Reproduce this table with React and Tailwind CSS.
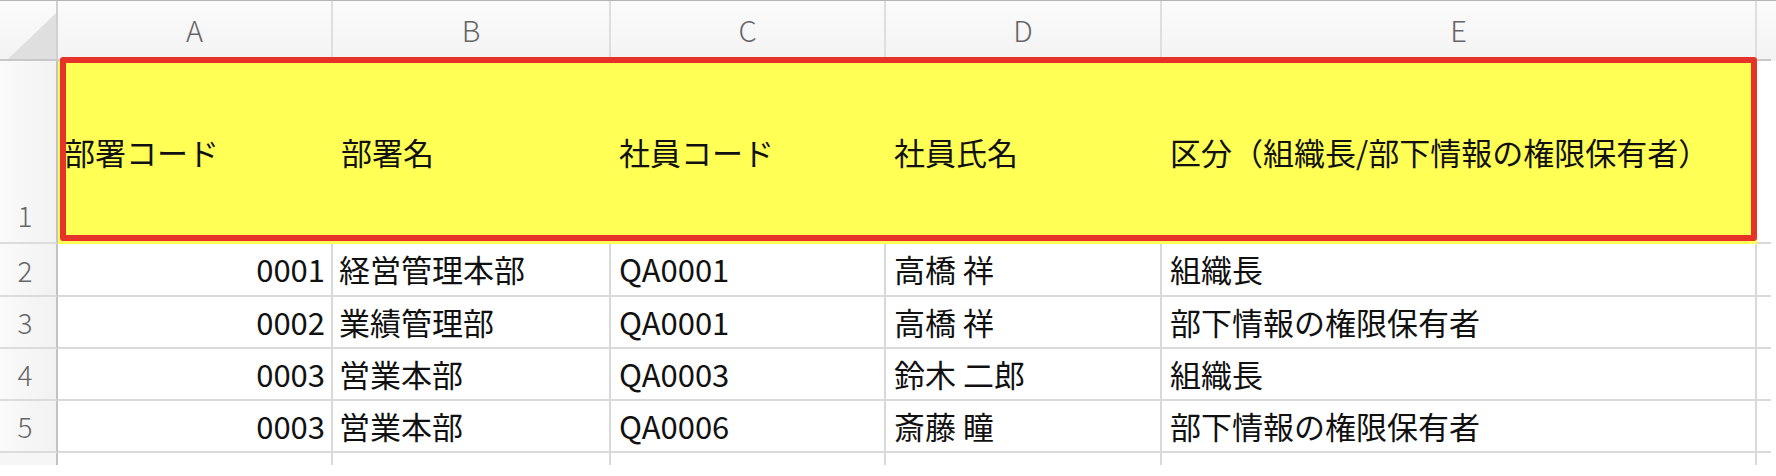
import React from "react";

const cols = [
  { key: "A", w: "w-[275px]" },
  { key: "B", w: "w-[278px]" },
  { key: "C", w: "w-[275px]" },
  { key: "D", w: "w-[276px]" },
  { key: "E", w: "w-[595px]" },
];

const headers = ["部署コード", "部署名", "社員コード", "社員氏名", "区分（組織長/部下情報の権限保有者）"];

const rows = [
  { n: 2, h: "h-[53px]", cells: ["0001", "経営管理本部", "QA0001", "高橋 祥", "組織長"] },
  { n: 3, h: "h-[52px]", cells: ["0002", "業績管理部", "QA0001", "高橋 祥", "部下情報の権限保有者"] },
  { n: 4, h: "h-[52px]", cells: ["0003", "営業本部", "QA0003", "鈴木 二郎", "組織長"] },
  { n: 5, h: "h-[52px]", cells: ["0003", "営業本部", "QA0006", "斎藤 瞳", "部下情報の権限保有者"] },
];

const RowHead = ({ children, className = "" }) => (
  <div
    className={`w-[58px] shrink-0 border-r-2 border-b-2 border-r-[#c2c2c2] border-b-[#dcdcdc] bg-gradient-to-r from-[#fafafa] to-[#f2f2f2] text-[28px] font-light text-[#666] flex justify-center pr-[6px] ${className}`}
  >
    {children}
  </div>
);

const App = () => {
  return (
    <div
      className="relative w-[1776px] h-[476px] bg-white overflow-hidden text-[#111]"
      style={{ fontFamily: '"Noto Sans CJK JP", "Noto Sans", sans-serif' }}
    >
      {/* column letters */}
      <div className="flex h-[61px] border-t border-[#b4b4b4] bg-gradient-to-b from-[#fbfbfb] to-[#f3f3f3]">
        <div className="w-[58px] shrink-0 border-r-2 border-b-2 border-r-[#d0d0d0] border-b-[#c8c8c8]">
          <svg width="56" height="58" className="block">
            <polygon points="8,58 56,12 56,58" fill="#dfdfdf" />
          </svg>
        </div>
        {cols.map((c) => (
          <div
            key={c.key}
            className={`${c.w} shrink-0 border-r-2 border-b-2 border-r-[#dedede] border-b-[#c8c8c8] flex items-center justify-center text-[29px] font-light text-[#666]`}
          >
            {c.key}
          </div>
        ))}
        <div className="w-[14px] shrink-0 border-b-2 border-b-[#c8c8c8]" />
      </div>

      {/* row 1 */}
      <div className="flex h-[183px]">
        <RowHead className="items-end pb-[6px]">1</RowHead>
        {cols.map((c, i) => (
          <div
            key={c.key}
            className={`${c.w} shrink-0 bg-[#ffff55] flex items-center text-[31px] ${i === 0 ? "pl-[6px]" : "pl-[8px]"}`}
          >
            <span className="whitespace-nowrap">{headers[i]}</span>
          </div>
        ))}
        <div className="w-[14px] shrink-0 border-b-2 border-[#d9d9d9]" />
      </div>

      {/* data rows */}
      {rows.map((r) => (
        <div key={r.n} className={`flex ${r.h}`}>
          <RowHead className="items-center">{r.n}</RowHead>
          {cols.map((c, i) => (
            <div
              key={c.key}
              className={`${c.w} shrink-0 border-r-2 border-b-2 border-[#d9d9d9] flex items-center text-[31px] ${
                i === 0 ? "justify-end pr-[6px]" : i === 1 ? "pl-[6px]" : "pl-[8px]"
              }`}
            >
              <span className="whitespace-nowrap">{r.cells[i]}</span>
            </div>
          ))}
          <div className="w-[14px] shrink-0 border-b-2 border-[#d9d9d9]" />
        </div>
      ))}

      {/* partial row 6 */}
      <div className="flex h-[12px]">
        <div className="w-[58px] shrink-0 border-r-2 border-r-[#c2c2c2] bg-[#f6f6f6]" />
        {cols.map((c) => (
          <div key={c.key} className={`${c.w} shrink-0 border-r-2 border-[#d9d9d9]`} />
        ))}
      </div>

      {/* selection highlight */}
      <div className="pointer-events-none absolute left-[60px] top-[57px] w-[1697px] h-[184px] border-[6px] border-[#e5332a] rounded-[3px]" />
    </div>
  );
};

export default App;
